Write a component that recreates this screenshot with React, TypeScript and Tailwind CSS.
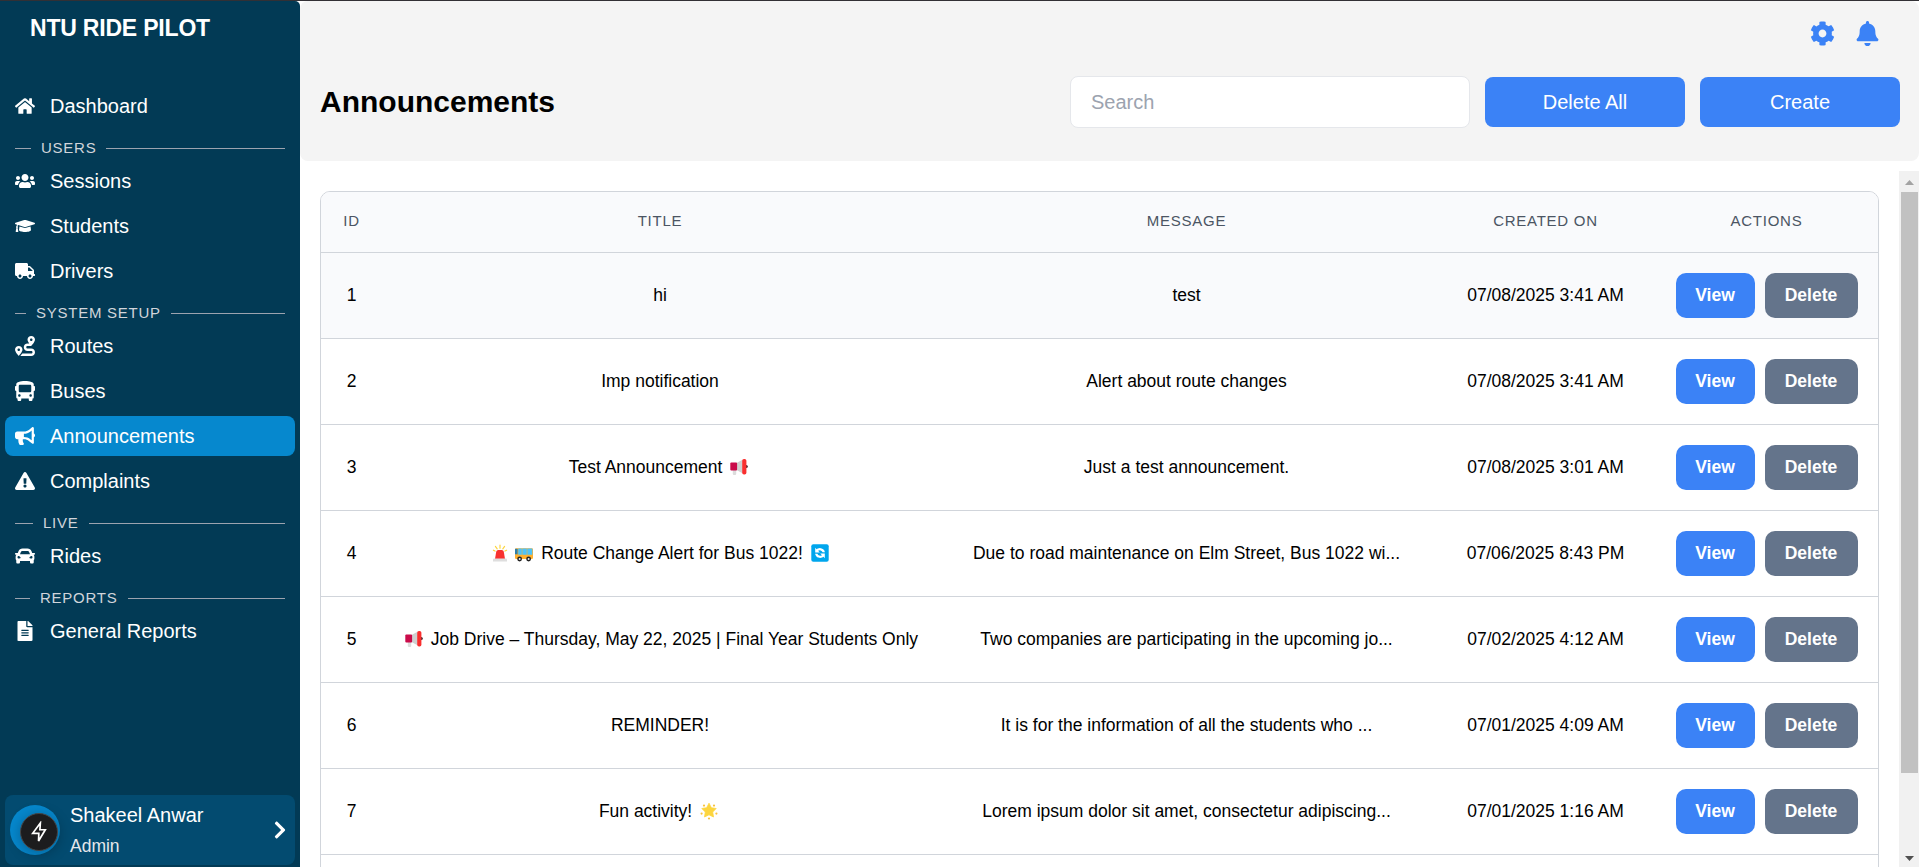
import React from "react";
import {
  FaHome, FaUsers, FaGraduationCap, FaTruck, FaRoute, FaBus, FaBullhorn,
  FaExclamationTriangle, FaCar, FaFileAlt, FaChevronRight, FaBell, FaCog,
} from "react-icons/fa";
import type { IconType } from "react-icons";

function Megaphone() {
  return (
    <svg viewBox="0 0 18 18" className="mx-[3px] inline-block size-[18px] align-[-3px]">
      <path d="M2.8 11.5h3.4v4.4a1 1 0 0 1-1 1h-1.4a1 1 0 0 1-1-1z" fill="#dcdcdc" />
      <path d="M6.5 5l6-3.2v13.4l-6-3.2z" fill="#d0d0d0" />
      <rect x="0.3" y="4.4" width="6.8" height="8" rx="1" fill="#ca0b4a" />
      <circle cx="16.3" cy="8.6" r="1.5" fill="#402a32" />
      <rect x="12.2" y="0.9" width="4.2" height="15.6" rx="1.8" fill="#f92f2f" />
    </svg>
  );
}

function Siren() {
  return (
    <svg viewBox="0 0 18 18" className="mx-[3px] inline-block size-[18px] align-[-3px]">
      <path d="M9 1v3.2M4.4 2.4l1.8 2.4M13.6 2.4l-1.8 2.4M2.4 6.2l1.6.9M15.6 6.2l-1.6.9" stroke="#fcd53f" strokeWidth="1.2" strokeLinecap="round" />
      <path d="M4 15l1.2-7.2A2.2 2.2 0 0 1 7.3 6h3.4a2.2 2.2 0 0 1 2.1 1.8L14 15z" fill="#f8312f" />
      <path d="M2 16a1.3 1.3 0 0 1 1.3-1.4h11.4A1.3 1.3 0 0 1 16 16v1.4H2z" fill="#dedede" />
    </svg>
  );
}

function BusEmoji() {
  return (
    <svg viewBox="0 0 18 18" className="mx-[3px] inline-block size-[18px] align-[-3px]">
      <path d="M0 5.4a1.2 1.2 0 0 1 1.2-1.2h15.6A1.2 1.2 0 0 1 18 5.4v8.4a1.2 1.2 0 0 1-1.2 1.2H1.2A1.2 1.2 0 0 1 0 13.8z" fill="#ffb02e" />
      <path d="M0 4.8h2.6v5.5H0z" fill="#2f7fa8" />
      <path d="M3.2 4.6h3.6v6.2H3.2zM7.3 4.6h4.5v6.2H7.3zM12.3 4.6h5v6.2h-5z" fill="#4fc3f7" />
      <circle cx="4.6" cy="15" r="2.4" fill="#212121" />
      <circle cx="4.6" cy="15" r="1" fill="#e6e6e6" />
      <circle cx="13.6" cy="15" r="2.4" fill="#212121" />
      <circle cx="13.6" cy="15" r="1" fill="#e6e6e6" />
    </svg>
  );
}

function Refresh() {
  return (
    <svg viewBox="0 0 18 18" className="mx-[3px] inline-block size-[18px] align-[-3px]">
      <rect x="0.3" y="0.3" width="17.4" height="17.4" rx="2" fill="#00a6ed" />
      <path d="M4.2 3.8v4.6h4.6L7.1 6.8a3 3 0 0 1 4.5 1.4h2.3A5.2 5.2 0 0 0 5.6 5.2z" fill="#fff" />
      <path d="M13.8 14.2V9.6H9.2l1.7 1.6a3 3 0 0 1-4.5-1.4H4.1a5.2 5.2 0 0 0 8.3 3z" fill="#fff" />
    </svg>
  );
}

function Star() {
  return (
    <svg viewBox="0 0 18 18" className="mx-[3px] inline-block size-[18px] align-[-3px]">
      <g fill="#f9c23c">
        <circle cx="4" cy="3.6" r="1.1" />
        <circle cx="14" cy="3.6" r="1.1" />
        <circle cx="1.6" cy="11.6" r="1.1" />
        <circle cx="16.4" cy="11.6" r="1.1" />
        <circle cx="9" cy="16.5" r="1.1" />
      </g>
      <path d="M9 1.2l2.3 4.5 4.9.8-3.5 3.5.8 5L9 12.8 4.5 15l.8-5L1.8 6.5l4.9-.8z" fill="#fcd53f" stroke="#fcd53f" strokeWidth="0.8" strokeLinejoin="round" />
    </svg>
  );
}

function Item({ icon: Icon, label, active }: { icon: IconType; label: string; active?: boolean }) {
  return (
    <div className={active
      ? "mx-[5px] flex h-10 items-center gap-[15px] rounded-lg bg-[#0688ce] px-[10px] text-xl text-white"
      : "mx-[5px] flex h-10 items-center gap-[15px] rounded-lg px-[10px] text-xl text-white"}>
      <Icon className="size-5 shrink-0" />
      <span>{label}</span>
    </div>
  );
}

const leads = { USERS: "w-4", "SYSTEM SETUP": "w-[11px]", LIVE: "w-[18px]", REPORTS: "w-[15px]" };

function Section({ label }: { label: keyof typeof leads }) {
  return (
    <div className="mx-[15px] flex h-[30px] items-center pb-[2px]">
      <div className={"h-px shrink-0 bg-[#9ca3af] " + leads[label]} />
      <span className="mx-[10px] text-[15px] leading-5 tracking-[0.75px] text-[#d1d5db]">{label}</span>
      <div className="h-px flex-1 bg-[#9ca3af]" />
    </div>
  );
}

const rows: { title: React.ReactNode; message: string; date: string }[] = [
  { title: "hi", message: "test", date: "07/08/2025 3:41 AM" },
  { title: "Imp notification", message: "Alert about route changes", date: "07/08/2025 3:41 AM" },
  { title: <>Test Announcement <Megaphone /></>, message: "Just a test announcement.", date: "07/08/2025 3:01 AM" },
  { title: <><Siren /><BusEmoji /> Route Change Alert for Bus 1022! <Refresh /></>, message: "Due to road maintenance on Elm Street, Bus 1022 wi...", date: "07/06/2025 8:43 PM" },
  { title: <><Megaphone /> Job Drive – Thursday, May 22, 2025 | Final Year Students Only</>, message: "Two companies are participating in the upcoming jo...", date: "07/02/2025 4:12 AM" },
  { title: "REMINDER!", message: "It is for the information of all the students who ...", date: "07/01/2025 4:09 AM" },
  { title: <>Fun activity! <Star /></>, message: "Lorem ipsum dolor sit amet, consectetur adipiscing...", date: "07/01/2025 1:16 AM" },
];

const columns = "grid grid-cols-[61px_556px_497px_221px_221px] items-center text-center";

export default function App() {
  return (
    <div className="flex h-[867px] w-full overflow-hidden border-t border-[#323035] bg-white font-['Liberation_Sans',Arial,sans-serif] text-black">
      <aside className="flex w-[300px] shrink-0 flex-col rounded-tr-[5px] bg-[#023a55]">
        <div className="pl-[30px] pt-[9px] text-[23px] leading-9 font-bold tracking-[-0.2px] text-white">NTU RIDE PILOT</div>
        <nav className="mt-10 flex flex-col">
          <Item icon={FaHome} label="Dashboard" />
          <div className="h-2" />
          <Section label="USERS" />
          <div className="-mt-[3px] flex flex-col gap-[5px]">
            <Item icon={FaUsers} label="Sessions" />
            <Item icon={FaGraduationCap} label="Students" />
            <Item icon={FaTruck} label="Drivers" />
          </div>
          <div className="h-2" />
          <Section label="SYSTEM SETUP" />
          <div className="-mt-[3px] flex flex-col gap-[5px]">
            <Item icon={FaRoute} label="Routes" />
            <Item icon={FaBus} label="Buses" />
            <Item icon={FaBullhorn} label="Announcements" active />
            <Item icon={FaExclamationTriangle} label="Complaints" />
          </div>
          <div className="h-2" />
          <Section label="LIVE" />
          <div className="-mt-[3px]"><Item icon={FaCar} label="Rides" /></div>
          <div className="h-2" />
          <Section label="REPORTS" />
          <div className="-mt-[3px]"><Item icon={FaFileAlt} label="General Reports" /></div>
        </nav>
        <div className="mx-[5px] mt-auto mb-[2px] flex h-[70px] items-center rounded-lg bg-[#034b70] px-[5px]">
          <div className="flex size-[50px] items-center justify-end rounded-full bg-[#0688ce] pt-[3px] pr-[2px]">
            <div className="flex size-[38px] items-center justify-center rounded-full border border-[#454547] bg-[#1c1c1e] shadow-[0_2px_14px_rgba(0,0,0,0.3)]">
              <svg viewBox="0 0 20 24" className="h-[22px] w-[18px]" fill="none" stroke="#fff" strokeWidth="1.9">
                <path d="M11.5 2L3 13.5h6.8L9.5 22 17 9.5h-6z" />
              </svg>
            </div>
          </div>
          <div className="ml-[10px] flex flex-1 flex-col">
            <span className="text-xl leading-[30px] text-white">Shakeel Anwar</span>
            <span className="pt-[2px] text-[17.5px] leading-7 text-[#e5e7eb]">Admin</span>
          </div>
          <FaChevronRight className="size-5 text-white" />
        </div>
      </aside>

      <main className="flex min-w-0 flex-1 flex-col">
        <header className="h-40 shrink-0 rounded-lg bg-[#f4f4f4]">
          <div className="flex h-[75px] items-start justify-end gap-5 pt-5 pr-[39px] text-[#3b82f6]">
            <FaCog className="size-[25px]" />
            <FaBell className="size-[25px]" />
          </div>
          <div className="flex h-[52px] items-center gap-[15px] pr-[19px] pl-5">
            <h1 className="flex-1 text-3xl font-bold">Announcements</h1>
            <input placeholder="Search" className="h-[52px] w-[400px] rounded-lg border border-[#e5e7eb] bg-white px-5 text-xl placeholder:text-[#9ca3af]" />
            <button className="h-[50px] w-[200px] rounded-lg bg-[#3b82f6] text-xl text-white">Delete All</button>
            <button className="h-[50px] w-[200px] rounded-lg bg-[#3b82f6] text-xl text-white">Create</button>
          </div>
        </header>

        <div className="mt-[10px] flex min-h-0 flex-1">
          <div className="min-w-0 flex-1 overflow-hidden pt-5 pr-5 pl-5">
            <div className="h-[800px] overflow-hidden rounded-[10px] border border-[#d1d5db]">
              <div className={columns + " h-[61px] border-b border-[#d1d5db] bg-[#f9fafc] pb-px text-[15px] tracking-[0.75px] text-[#4b5563]"}>
                <div>ID</div><div>TITLE</div><div>MESSAGE</div><div>CREATED ON</div><div>ACTIONS</div>
              </div>
              {rows.map((row, i) => (
                <div key={row.message} className={columns + " h-[86px] border-b border-[#d1d5db] text-[17.5px] " + (i === 0 ? "bg-[#f9fafc]" : "bg-white")}>
                  <div>{i + 1}</div>
                  <div className="whitespace-nowrap">{row.title}</div>
                  <div className="whitespace-nowrap">{row.message}</div>
                  <div>{row.date}</div>
                  <div className="flex justify-center gap-[10px] font-bold text-white">
                    <button className="h-[45px] w-[79px] rounded-[10px] bg-[#3b82f6]">View</button>
                    <button className="h-[45px] w-[93px] rounded-[10px] bg-[#64748b]">Delete</button>
                  </div>
                </div>
              ))}
            </div>
          </div>
          <div className="flex w-5 shrink-0 flex-col items-center bg-[#f1f1f1]">
            <svg viewBox="0 0 20 21" className="h-[21px] w-5 shrink-0"><path d="M6 14h9l-4.5-5z" fill="#a3a3a3" /></svg>
            <div className="h-[581px] w-[17px] shrink-0 bg-[#c1c1c1]" />
            <svg viewBox="0 0 20 21" className="mt-auto h-[21px] w-5 shrink-0"><path d="M6 10h9l-4.5 5z" fill="#505050" /></svg>
          </div>
        </div>
      </main>
    </div>
  );
}
